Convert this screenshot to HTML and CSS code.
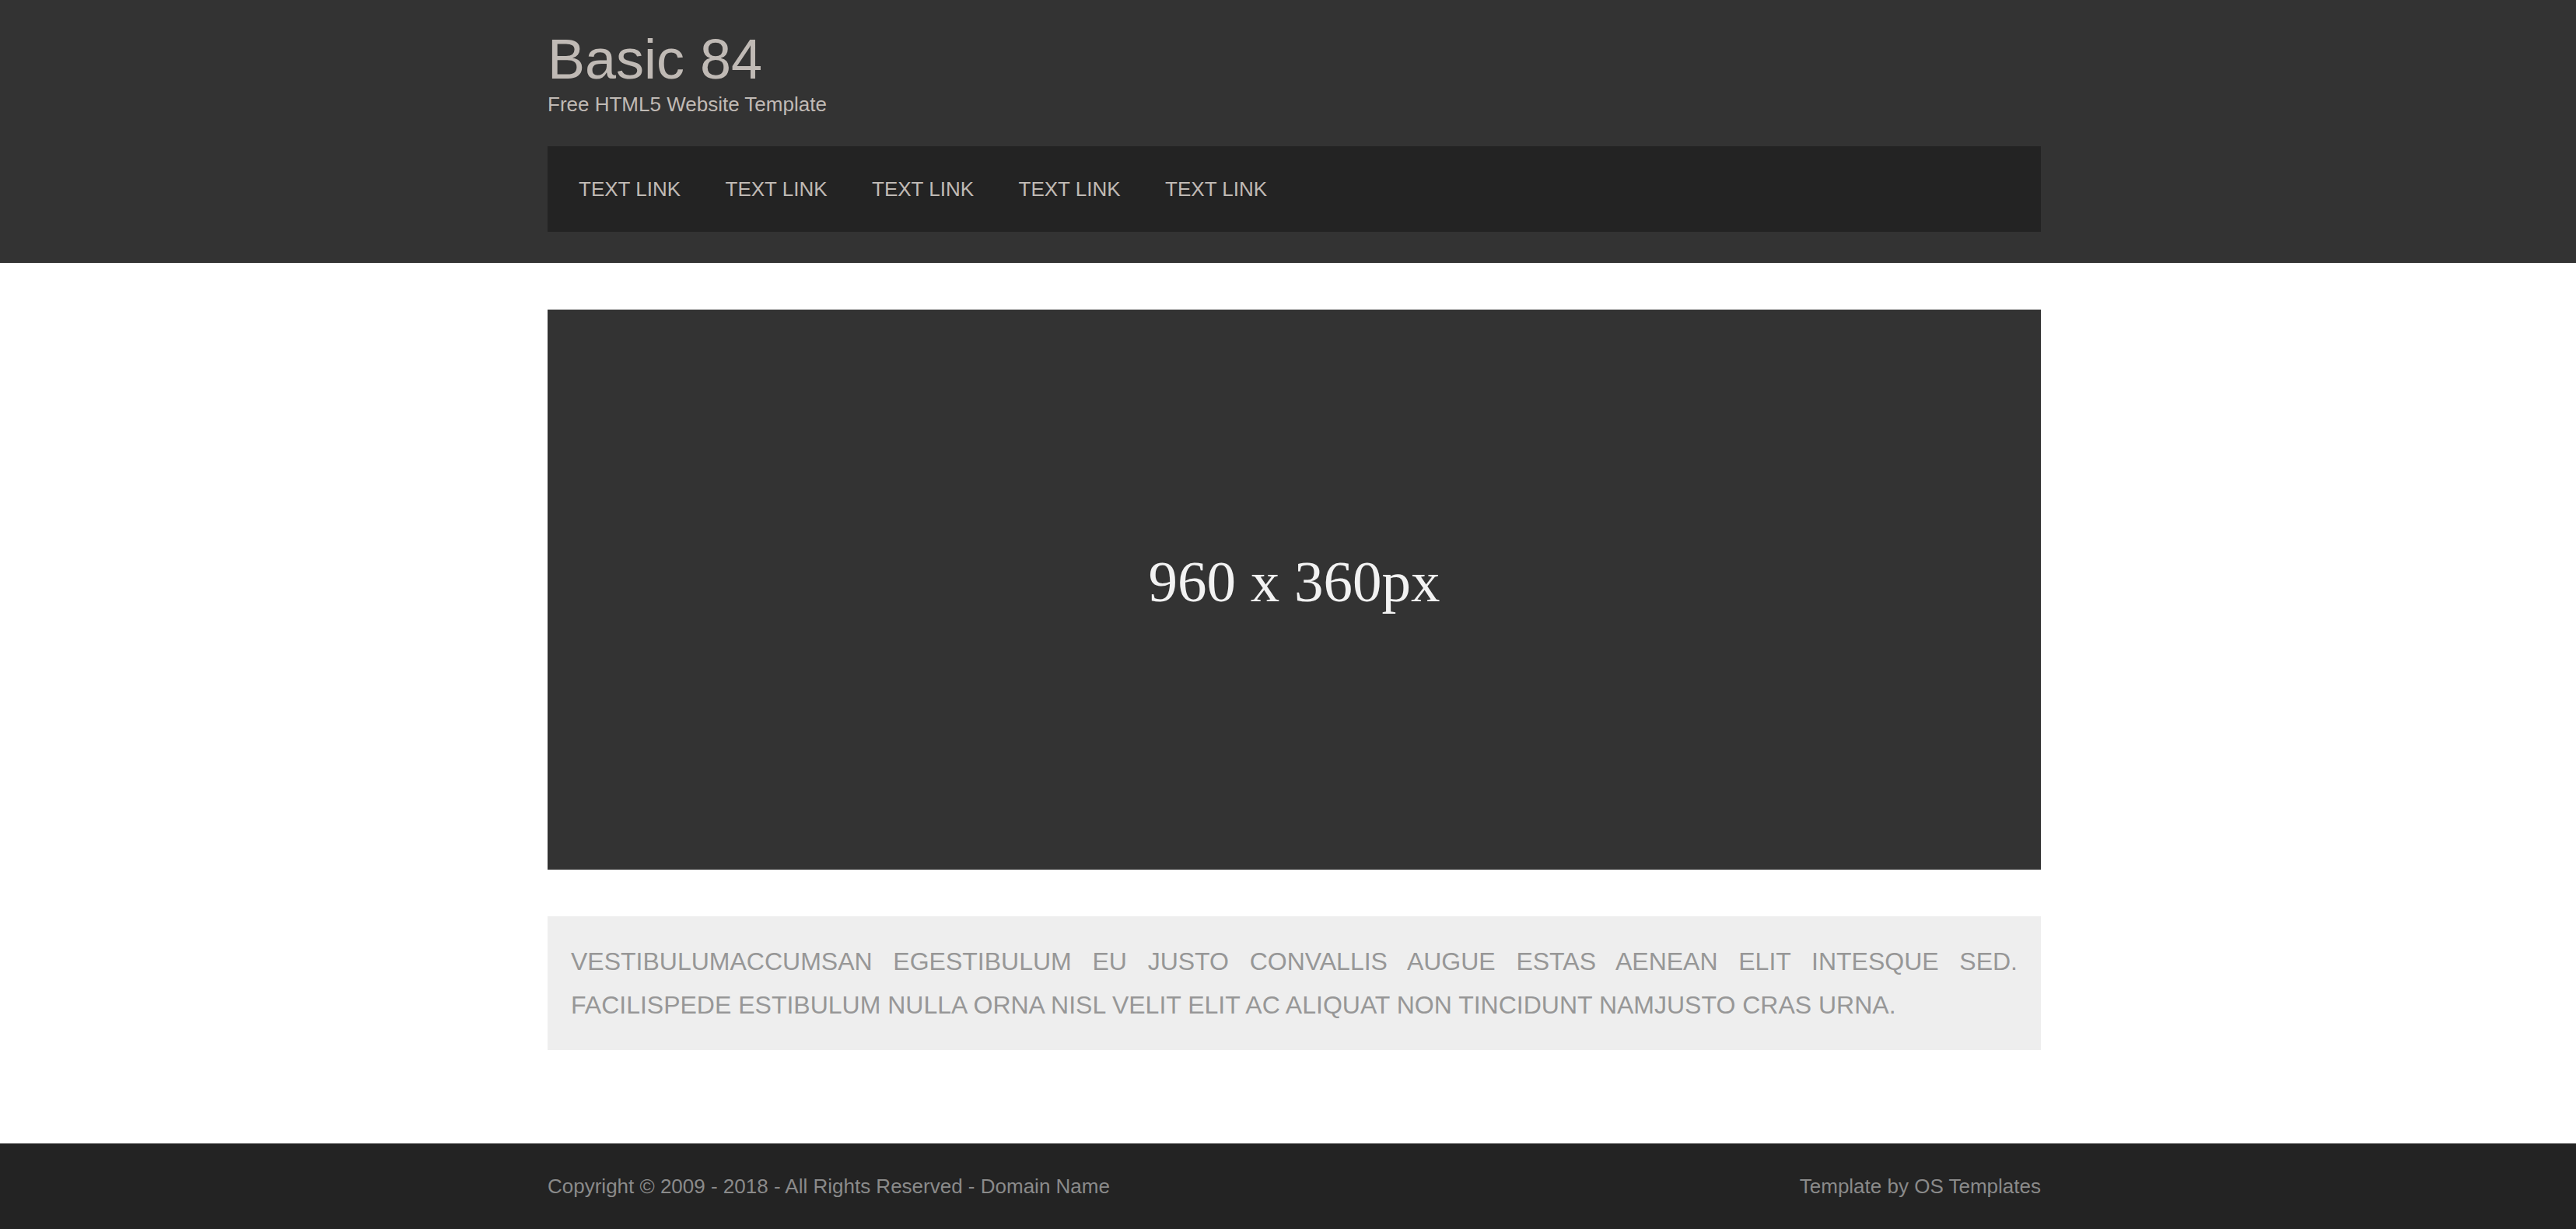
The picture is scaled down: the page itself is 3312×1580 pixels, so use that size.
FILE: index.html
```html
<!DOCTYPE html>
<html lang="en">
<head>
<meta charset="utf-8">
<title>Basic 84</title>
<link rel="stylesheet" href="styles.css">
</head>
<body>
<header class="row row-header">
  <div class="wrapper">
    <div class="logo">
      <h1 class="logo-title">Basic 84</h1>
      <p class="logo-sub">Free HTML5 Website Template</p>
    </div>
    <nav class="mainav">
      <ul class="mainav-list">
        <li class="mainav-item"><a class="mainav-link" href="#">Text Link</a></li>
        <li class="mainav-item"><a class="mainav-link" href="#">Text Link</a></li>
        <li class="mainav-item"><a class="mainav-link" href="#">Text Link</a></li>
        <li class="mainav-item"><a class="mainav-link" href="#">Text Link</a></li>
        <li class="mainav-item"><a class="mainav-link" href="#">Text Link</a></li>
      </ul>
    </nav>
  </div>
</header>
<main class="row row-main">
  <div class="wrapper">
    <div class="hero"><span class="hero-label">960 x 360px</span></div>
    <div class="intro">
      <p class="intro-text">Vestibulumaccumsan egestibulum eu justo convallis augue estas aenean elit intesque sed. Facilispede estibulum nulla orna nisl velit elit ac aliquat non tincidunt namjusto cras urna.</p>
    </div>
  </div>
</main>
<footer class="row row-footer">
  <div class="wrapper footer-inner">
    <p class="footer-text">Copyright &copy; 2009 - 2018 - All Rights Reserved - <a class="footer-link" href="#">Domain Name</a></p>
    <p class="footer-text">Template by <a class="footer-link" href="#">OS Templates</a></p>
  </div>
</footer>
</body>
</html>
```
FILE: styles.css
```css
* {
  box-sizing: border-box;
}

html, body {
  margin: 0;
  padding: 0;
}

body {
  font-family: "Liberation Sans", Arial, sans-serif;
  background: #ffffff;
}

.row {
  padding-left: 16px;
}

.wrapper {
  width: 1920px;
  margin: 0 auto;
}

/* Header */
.row-header {
  background: #333333;
  padding-top: 40px;
  padding-bottom: 40px;
}

.logo-title {
  margin: 0;
  font-size: 72px;
  line-height: 72px;
  font-weight: normal;
  color: #c0bab5;
}

.logo-sub {
  margin: 7px 0 0;
  font-size: 26px;
  line-height: 30px;
  color: #c0bab5;
}

.mainav {
  margin-top: 39px;
  height: 110px;
  background: #232323;
  display: flex;
  align-items: center;
  padding-left: 40px;
}

.mainav-list {
  list-style: none;
  margin: 0;
  padding: 0;
  display: flex;
  gap: 57.5px;
}

.mainav-link {
  display: block;
  font-size: 26px;
  line-height: 30px;
  text-transform: uppercase;
  text-decoration: none;
  color: #c0bab5;
}

/* Main */
.row-main {
  padding-top: 60px;
  padding-bottom: 120px;
}

.hero {
  height: 720px;
  background: #333333;
  display: flex;
  align-items: center;
  justify-content: center;
  padding-bottom: 20px;
}

.hero-label {
  font-family: "Liberation Serif", "DejaVu Serif", serif;
  font-size: 75px;
  color: #f2f2f2;
}

.intro {
  margin-top: 60px;
  background: #eeeeee;
  padding: 30px;
}

.intro-text {
  margin: 0;
  font-size: 32px;
  line-height: 56px;
  text-transform: uppercase;
  text-align: justify;
  color: #979797;
}

/* Footer */
.row-footer {
  background: #232323;
  padding-top: 40px;
  padding-bottom: 40px;
}

.footer-inner {
  display: flex;
  justify-content: space-between;
}

.footer-text {
  margin: 0;
  font-size: 26px;
  line-height: 30px;
  color: #8a8a8a;
}

.footer-link {
  color: inherit;
  text-decoration: none;
}
```
